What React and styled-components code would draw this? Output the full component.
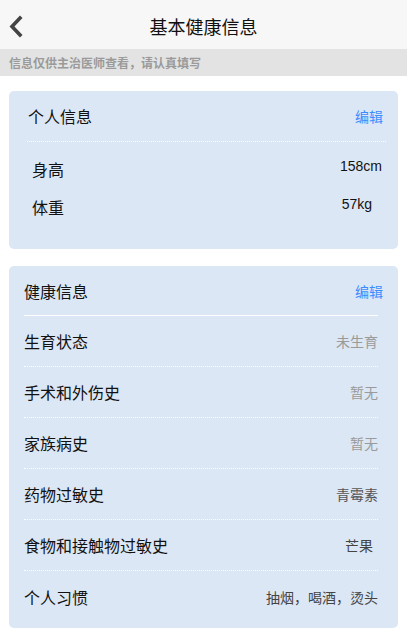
import React from 'react';
import styled, { createGlobalStyle } from 'styled-components';

const GlobalStyle = createGlobalStyle`
  *, *::before, *::after {
    box-sizing: border-box;
  }
  body {
    margin: 0;
    background: #fff;
    font-family: "Noto Sans", "Noto Sans CJK SC", sans-serif;
  }
`;

const Page = styled.div`
  width: 407px;
  min-height: 639px;
  background: #fff;
`;

const Header = styled.div`
  position: relative;
  height: 49px;
  background: #f7f7f7;
  display: flex;
  align-items: center;
  justify-content: center;
`;

const Back = styled.svg`
  position: absolute;
  left: 8px;
  top: 15px;
`;

const Title = styled.h1`
  margin: 0;
  font-size: 18px;
  font-weight: 400;
  color: #111;
  padding-top: 2px;
`;

const Notice = styled.div`
  height: 27px;
  background: #e3e3e3;
  color: #9a9a9a;
  font-size: 12px;
  font-weight: 700;
  padding-left: 9px;
  display: flex;
  align-items: center;
`;

const Body = styled.div`
  padding: 15px 9px 0;
  display: flex;
  flex-direction: column;
  gap: 17px;
`;

const Card = styled.div`
  background: #dce7f5;
  border-radius: 5px;
  padding: ${p => p.pad};
`;

const CardHead = styled.div`
  height: ${p => p.h}px;
  display: flex;
  align-items: center;
  justify-content: space-between;
  padding: 0 ${p => p.right}px 0 ${p => p.left}px;
  border-bottom: 1px ${p => p.line} #fff;
  margin: 0 ${p => p.mr}px 0 ${p => p.ml}px;
  font-size: 16px;
  color: #111;
`;

const Edit = styled.span`
  color: #3b8cff;
  font-size: 14px;
  margin-right: ${p => p.shift || 0}px;
`;

const InfoList = styled.div`
  padding: 8px 0 0;
`;

const InfoRow = styled.div`
  height: 38px;
  display: flex;
  justify-content: space-between;
  align-items: center;
  padding: 0 ${p => p.right}px 0 23px;
  font-size: 16px;
  color: #111;
`;

const InfoValue = styled.span`
  font-family: "Liberation Sans", Arial, sans-serif;
  font-size: 14px;
  position: relative;
  top: -3px;
`;

const HealthRow = styled.div`
  height: 51px;
  display: flex;
  align-items: center;
  justify-content: space-between;
  margin: 0 20px 0 15px;
  padding-right: ${p => p.right}px;
  border-bottom: ${p => (p.last ? 'none' : '1px dotted #fff')};
  font-size: 16px;
  color: #111;
`;

const Value = styled.span`
  font-size: 14px;
  color: ${p => p.colour};
`;

const rows = [
  { label: '生育状态', value: '未生育', colour: '#9a9a9a' },
  { label: '手术和外伤史', value: '暂无', colour: '#9a9a9a' },
  { label: '家族病史', value: '暂无', colour: '#9a9a9a' },
  { label: '药物过敏史', value: '青霉素', colour: '#555' },
  { label: '食物和接触物过敏史', value: '芒果', colour: '#444', right: 5 },
  { label: '个人习惯', value: '抽烟，喝酒，烫头', colour: '#444' },
];

export default function App() {
  return (
    <Page>
      <GlobalStyle />
      <Header>
        <Back width="16" height="24" viewBox="0 0 16 24">
          <path d="M12 3 L4 11.5 L12 20" fill="none" stroke="#444" strokeWidth="3.6" strokeLinecap="square" />
        </Back>
        <Title>基本健康信息</Title>
      </Header>
      <Notice>信息仅供主治医师查看，请认真填写</Notice>
      <Body>
        <Card pad="0 0 23px">
          <CardHead h={51} left={1} right={3} ml={18} mr={12} line="dotted">
            <span>个人信息</span>
            <Edit>编辑</Edit>
          </CardHead>
          <InfoList>
            <InfoRow right={16}>
              <span>身高</span>
              <InfoValue>158cm</InfoValue>
            </InfoRow>
            <InfoRow right={26}>
              <span>体重</span>
              <InfoValue>57kg</InfoValue>
            </InfoRow>
          </InfoList>
        </Card>
        <Card pad="0 0 6px">
          <CardHead h={50} left={0} right={0} ml={15} mr={20} line="solid">
            <span>健康信息</span>
            <Edit shift={-5}>编辑</Edit>
          </CardHead>
          {rows.map((r, i) => (
            <HealthRow key={r.label} right={r.right || 0} last={i === rows.length - 1}>
              <span>{r.label}</span>
              <Value colour={r.colour}>{r.value}</Value>
            </HealthRow>
          ))}
        </Card>
      </Body>
    </Page>
  );
}
